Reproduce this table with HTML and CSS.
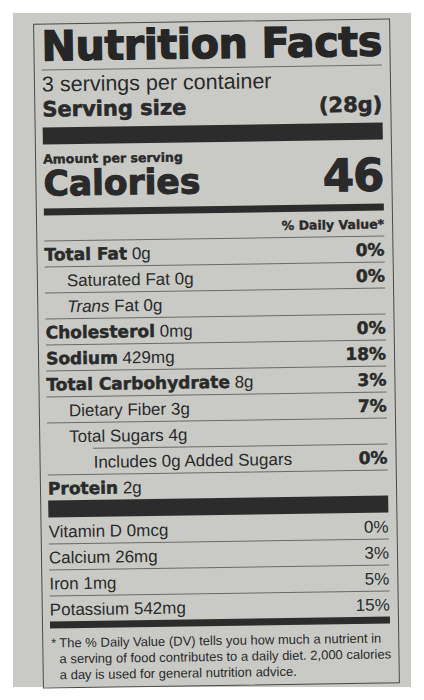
FILE: index.html
```html
<!DOCTYPE html>
<html lang="en">
<head>
  <meta charset="UTF-8" />
  <meta name="viewport" content="width=device-width, initial-scale=1.0"/>
  <title>Nutrition Facts</title>
  <link rel="stylesheet" href="styles.css">
</head>
<body>

  <div class="card">
    <section class="label">
      <h1 class="title">Nutrition Facts</h1>
      <div class="servings">3 servings per container</div>
      <div class="serving-size"><span>Serving size</span><span>(28g)</span></div>

      <div class="bar bar-thick"></div>
      <div class="amount">Amount per serving</div>
      <div class="calories"><span>Calories</span><span class="cal-value">46</span></div>
      <div class="bar bar-medium"></div>

      <div class="dv-head">% Daily Value*</div>

      <div class="row"><span><b>Total Fat</b> 0g</span><b>0%</b></div>
      <div class="row indent"><span>Saturated Fat 0g</span><b>0%</b></div>
      <div class="row indent"><span><i>Trans</i> Fat 0g</span></div>
      <div class="row"><span><b>Cholesterol</b> 0mg</span><b>0%</b></div>
      <div class="row"><span><b>Sodium</b> 429mg</span><b>18%</b></div>
      <div class="row"><span><b>Total Carbohydrate</b> 8g</span><b>3%</b></div>
      <div class="row indent"><span>Dietary Fiber 3g</span><b>7%</b></div>
      <div class="row indent"><span>Total Sugars 4g</span></div>
      <div class="row sub"><span>Includes 0g Added Sugars</span><b>0%</b></div>
      <div class="row"><span><b>Protein</b> 2g</span></div>

      <div class="bar bar-thick bar-flat"></div>

      <div class="row no-line"><span>Vitamin D 0mcg</span><span>0%</span></div>
      <div class="row"><span>Calcium 26mg</span><span>3%</span></div>
      <div class="row"><span>Iron 1mg</span><span>5%</span></div>
      <div class="row"><span>Potassium 542mg</span><span>15%</span></div>

      <div class="bar bar-medium bar-flat"></div>

      <p class="footnote">
        <span class="star">*</span>
        <span class="note-text">The % Daily Value (DV) tells you how much a nutrient in<br>a serving of food contributes to a daily diet. 2,000 calories<br>a day is used for general nutrition advice.</span>
      </p>
    </section>
  </div>

</body>
</html>
```

FILE: styles.css
```css
* {
  margin: 0;
  padding: 0;
  box-sizing: border-box;
}

body {
  background: #ffffff;
  padding: 13px;
  font-family: 'Liberation Sans', Arial, sans-serif;
  color: #2a2a2a;
}

.card {
  width: 398px;
  height: 674px;
  background: #c9cac6;
  padding: 8px 0 0 25px;
}

/* the label sits a little crooked on the photo */
.label {
  width: 356.5px;
  border: 1.5px solid #4a4a4a;
  padding: 0 7.5px 0 7px;
  transform: rotate(-0.85deg);
}

b {
  font-family: 'DejaVu Sans', sans-serif;
  font-weight: bold;
  -webkit-text-stroke: 0.5px currentColor;
}

.title {
  font-family: 'DejaVu Sans', sans-serif;
  font-weight: bold;
  font-size: 41px;
  line-height: 45px;
  letter-spacing: -0.25px;
  white-space: nowrap;
  color: #262626;
  -webkit-text-stroke: 1.4px currentColor;
  border-bottom: 1px solid #6a6a6a;
}

.servings {
  font-size: 21.5px;
  line-height: 24px;
  padding-top: 2px;
}

.serving-size {
  display: flex;
  justify-content: space-between;
  font-family: 'DejaVu Sans', sans-serif;
  font-weight: bold;
  font-size: 21px;
  line-height: 24px;
  padding-top: 1px;
  -webkit-text-stroke: 0.6px currentColor;
}

.bar {
  background: #2c2c2c;
}

.bar-thick {
  height: 17px;
  margin-top: 6px;
}

.bar-medium {
  height: 7px;
  margin-top: 8px;
}

.bar-flat {
  margin-top: 0;
}

.amount {
  font-family: 'DejaVu Sans', sans-serif;
  font-weight: bold;
  font-size: 12.5px;
  line-height: 15px;
  margin-top: 7px;
  -webkit-text-stroke: 0.4px currentColor;
}

.calories {
  display: flex;
  justify-content: space-between;
  align-items: baseline;
  height: 34px;
  font-family: 'DejaVu Sans', sans-serif;
  font-weight: bold;
  font-size: 34.5px;
  line-height: 34px;
  -webkit-text-stroke: 1.1px currentColor;
}

.cal-value {
  font-size: 45px;
  line-height: 27px;
  letter-spacing: -1px;
}

.dv-head {
  font-family: 'DejaVu Sans', sans-serif;
  font-weight: bold;
  font-size: 12.5px;
  line-height: 15px;
  text-align: right;
  padding: 6px 0 4px;
  -webkit-text-stroke: 0.4px currentColor;
}

.row {
  display: flex;
  justify-content: space-between;
  height: 26px;
  border-top: 1px solid #6a6a6a;
  padding-top: 2px;
  font-size: 17px;
  line-height: 23px;
}

.row.no-line {
  border-top: none;
  padding-top: 3px;
}

.row.indent span:first-child {
  padding-left: 22px;
}

.row.sub {
  margin-left: 46px;
}

.footnote {
  display: flex;
  font-size: 13px;
  line-height: 16px;
  padding: 7px 0 4px 1px;
  white-space: nowrap;
}

.star {
  width: 8px;
  flex: none;
}
```
